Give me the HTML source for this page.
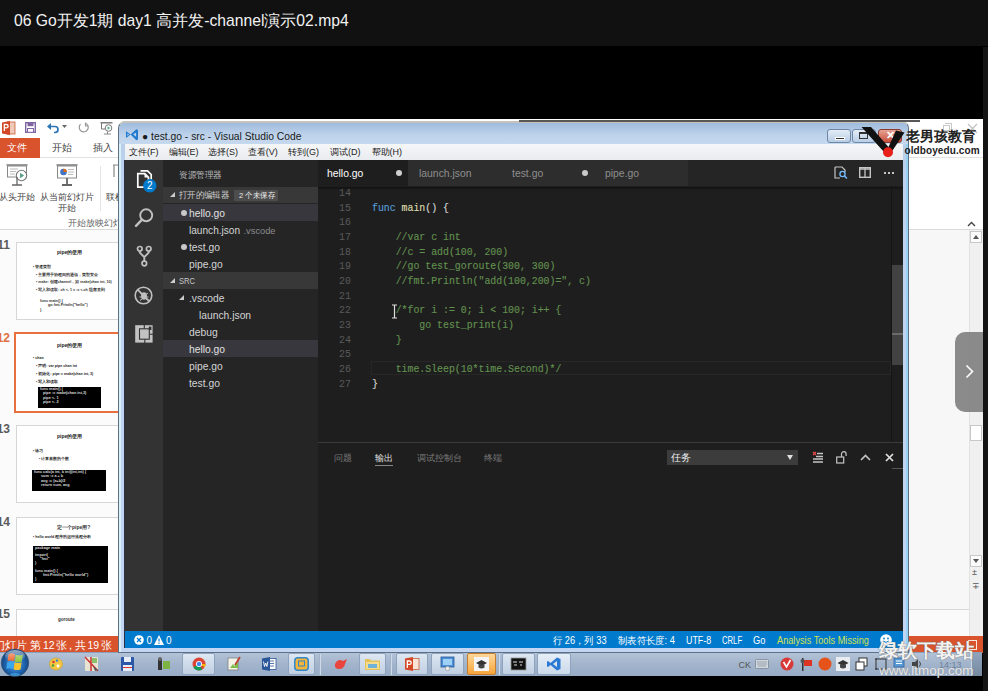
<!DOCTYPE html>
<html><head><meta charset="utf-8">
<style>
*{margin:0;padding:0;box-sizing:border-box}
html,body{width:988px;height:691px;overflow:hidden;background:#000;font-family:"Liberation Sans",sans-serif}
.a{position:absolute}
svg{position:absolute;overflow:visible}
#title{left:0;top:0;width:988px;height:46px;background:#111111;color:#f2f2f2;font-size:15.7px;line-height:18px;padding:12px 0 0 14px;white-space:nowrap}
#rstrip{left:983px;top:47px;width:5px;height:644px;background:#141414}
/* PowerPoint */
#ppt{left:0;top:119px;width:983px;height:534px;background:#fff}
.cj{font-family:"Liberation Sans",sans-serif;white-space:nowrap}
.pt{position:absolute;font-size:11px;color:#444;white-space:nowrap;line-height:13px}
.thumb{position:absolute;left:15.5px;width:110px;height:78px;background:#fff;border:1px solid #d6d6d6}
.thumb.sel{left:14px;border:2px solid #e8703f;height:81px;width:112px}
.tnum{position:absolute;left:-20px;width:30px;text-align:right;font-size:12px;color:#5a5a5a;line-height:14px;font-weight:bold}
.ln{position:absolute;height:2px;background:#333}
.blk{position:absolute;background:#000}
.tt{position:absolute;white-space:nowrap;line-height:1;font-family:"Liberation Sans",sans-serif}
</style></head><body>
<div id="title" class="a">06 Go开发1期 day1 高并发-channel演示02.mp4</div>
<div id="rstrip" class="a"></div>

<!-- PowerPoint background window -->
<div id="ppt" class="a"></div>

<!-- QAT icons -->
<svg style="left:2px;top:121px" width="13" height="14" viewBox="0 0 13 14">
 <rect x="5" y="1" width="8" height="12" fill="#f1c9b8" stroke="#c8603a" stroke-width=".8"/>
 <path d="M0 1.5 L8 0 L8 14 L0 12.5Z" fill="#d24726"/>
 <path d="M2.3 10V3.5h2.2a1.6 1.6 0 0 1 0 3.3H2.3" fill="none" stroke="#fff" stroke-width="1.3"/>
</svg>
<svg style="left:25px;top:122px" width="11" height="11" viewBox="0 0 11 11">
 <rect x=".7" y=".7" width="9.6" height="9.6" fill="#fff" stroke="#8064a2" stroke-width="1.4"/>
 <rect x="2.5" y=".7" width="6" height="3.5" fill="#8064a2"/>
 <rect x="2.5" y="6.5" width="6" height="3.8" fill="#fff" stroke="#8064a2" stroke-width="1"/>
</svg>
<svg style="left:47px;top:122px" width="12" height="11" viewBox="0 0 12 11">
 <path d="M3 4.5h5a3 3 0 0 1 0 6h-1" fill="none" stroke="#2e75b6" stroke-width="1.7"/>
 <path d="M0 4.5 L4 1 L4 8Z" fill="#2e75b6"/>
</svg>
<svg style="left:62px;top:125px" width="5" height="3" viewBox="0 0 5 3"><path d="M0 0h5L2.5 3z" fill="#666"/></svg>
<svg style="left:78px;top:122px" width="11" height="11" viewBox="0 0 11 11">
 <path d="M7.5 1.2A4.5 4.5 0 1 1 2.5 2.2" fill="none" stroke="#999" stroke-width="1.2"/>
 <path d="M7.5 0.5v3.5h3" fill="none" stroke="#999" stroke-width="1.2"/>
</svg>
<svg style="left:100px;top:122px" width="13" height="13" viewBox="0 0 13 13">
 <path d="M0.5 .8h12" stroke="#666" stroke-width="1.3"/>
 <path d="M1.5 1v6h4" fill="none" stroke="#777" stroke-width="1"/>
 <circle cx="8.5" cy="6" r="3.3" fill="#fff" stroke="#777" stroke-width="1"/>
 <path d="M7.6 4.3v3.4l2.5-1.7z" fill="#3aa88f"/>
 <path d="M4 12h7M7.5 9.5v2.5" stroke="#888" stroke-width="1"/>
</svg>
<!-- tabs -->
<div class="a" style="left:0;top:138px;width:40px;height:20px;background:#d9532c"></div>
<div class="pt" style="left:7px;top:141px;color:#fff;font-size:10px;line-height:14px">文件</div>
<div class="pt" style="left:52px;top:141px;font-size:10px;line-height:14px;color:#444">开始</div>
<div class="pt" style="left:93px;top:141px;font-size:10px;line-height:14px;color:#444">插入</div>
<div class="a" style="left:40px;top:157px;width:943px;height:1px;background:#e1e1e1"></div>
<!-- ribbon buttons -->
<svg style="left:6px;top:164px" width="22" height="22" viewBox="0 0 22 22">
 <path d="M0.5 1h21" stroke="#777" stroke-width="1.5"/>
 <rect x="1.5" y="2" width="19" height="11" fill="#fff" stroke="#888" stroke-width="1"/>
 <path d="M4 5h8M4 7.5h6M4 10h5" stroke="#bbb" stroke-width="1"/>
 <circle cx="15.5" cy="11.5" r="5.2" fill="#fff" stroke="#777" stroke-width="1.1"/>
 <path d="M14 8.8v5.4l4.2-2.7z" fill="#5aa08a"/>
 <path d="M6 21h10M11 13v8" stroke="#666" stroke-width="1.3"/>
</svg>
<svg style="left:56px;top:164px" width="22" height="22" viewBox="0 0 22 22">
 <path d="M0.5 1h21" stroke="#777" stroke-width="1.5"/>
 <rect x="1.5" y="2" width="19" height="12" fill="#fff" stroke="#888" stroke-width="1"/>
 <circle cx="7.5" cy="8" r="3.3" fill="#4472c4"/>
 <path d="M7.5 8V4.7A3.3 3.3 0 0 1 10.8 8z" fill="#e46c0a"/>
 <path d="M12 5.5h6M12 8h6M12 10.5h5" stroke="#bbb" stroke-width="1"/>
 <path d="M6 21h10M11 14v7" stroke="#666" stroke-width="1.8"/>
</svg>
<div class="pt" style="left:-1px;top:191.5px;font-size:9px;line-height:11px">从头开始</div>
<div class="pt" style="left:40px;top:191.5px;font-size:9px;line-height:11px">从当前幻灯片</div>
<div class="pt" style="left:58px;top:202.5px;font-size:9px;line-height:11px">开始</div>
<div class="a" style="left:100px;top:166px;width:1px;height:45px;background:#e4e4e4"></div>
<div class="pt" style="left:106px;top:191.5px;font-size:9px;line-height:11px">联机</div>
<svg style="left:112px;top:164px" width="8" height="20" viewBox="0 0 8 20"><path d="M1 1h7M2 1v12" stroke="#888" stroke-width="1.2"/></svg>
<div class="pt" style="left:68px;top:218px;font-size:9px;line-height:11px;color:#666">开始放映幻灯片</div>
<div class="a" style="left:0;top:229px;width:983px;height:1px;background:#dadada"></div>
<!-- thumbnail pane -->
<div class="a" style="left:0;top:230px;width:983px;height:406px;background:#f7f7f7"></div>
<div class="a" style="left:0;top:230px;width:118px;height:406px;background:#fbfbfc"></div>
<!-- thumbnails -->
<div class="tnum" style="top:238px;">11</div>
<div class="thumb" style="top:242px"></div>
<div class="tt" style="left:57px;top:250px;font-size:5px;color:#222;font-weight:bold;">pipe的使用</div>
<div class="tt" style="left:33px;top:266px;font-size:3.6px;color:#222;font-weight:bold;">▪ 管道类型</div>
<div class="tt" style="left:36px;top:274px;font-size:3.6px;color:#222;font-weight:bold;">▪ 主要用于协程间的通信，类型安全</div>
<div class="tt" style="left:36px;top:281px;font-size:3.6px;color:#333;font-weight:bold;">▪ make: 创建channel，如 make(chan int, 10)</div>
<div class="tt" style="left:36px;top:289px;font-size:3.6px;color:#333;font-weight:bold;">▪ 写入和读取: ch &lt;- 1   v := &lt;-ch  阻塞直到</div>
<div class="tt" style="left:40px;top:300px;font-size:3.8px;color:#333;font-weight:bold;">func main() {</div>
<div class="tt" style="left:48px;top:304px;font-size:3.8px;color:#333;font-weight:bold;">go fmt.Println("hello")</div>
<div class="tt" style="left:40px;top:309px;font-size:3.8px;color:#333;font-weight:bold;">}</div>
<div class="tnum" style="top:331px;color:#e0703f">12</div>
<div class="thumb sel" style="top:332px"></div>
<div class="tt" style="left:57px;top:343px;font-size:5px;color:#222;font-weight:bold;">pipe的使用</div>
<div class="tt" style="left:33px;top:357px;font-size:3.6px;color:#222;font-weight:bold;">▪ chan</div>
<div class="tt" style="left:36px;top:365px;font-size:3.6px;color:#222;font-weight:bold;">▪ 声明: var pipe chan int</div>
<div class="tt" style="left:36px;top:373px;font-size:3.6px;color:#222;font-weight:bold;">▪ 初始化: pipe = make(chan int, 3)</div>
<div class="tt" style="left:36px;top:381px;font-size:3.6px;color:#222;font-weight:bold;">▪ 写入和读取</div>
<div class="blk" style="left:38px;top:387px;width:63px;height:21px"></div>
<div class="tt" style="left:40px;top:387.5px;font-size:3.8px;color:#ddd;font-weight:bold;">func main() {</div>
<div class="tt" style="left:43px;top:392px;font-size:3.8px;color:#ddd;font-weight:bold;">pipe := make(chan int,3)</div>
<div class="tt" style="left:43px;top:396.5px;font-size:3.8px;color:#ddd;font-weight:bold;">pipe &lt;- 1</div>
<div class="tt" style="left:43px;top:401px;font-size:3.8px;color:#ddd;font-weight:bold;">pipe &lt;- 2</div>
<div class="tnum" style="top:422px;">13</div>
<div class="thumb" style="top:425px"></div>
<div class="tt" style="left:57px;top:434px;font-size:5px;color:#222;font-weight:bold;">pipe的使用</div>
<div class="tt" style="left:33px;top:450px;font-size:3.6px;color:#222;font-weight:bold;">▪ 练习</div>
<div class="tt" style="left:39px;top:458px;font-size:3.6px;color:#222;font-weight:bold;">▪ 计算素数的个数</div>
<div class="blk" style="left:32px;top:470px;width:74px;height:21px"></div>
<div class="tt" style="left:34px;top:470.5px;font-size:3.8px;color:#ddd;font-weight:bold;">func calc(a int, b int)(int,int) {</div>
<div class="tt" style="left:41px;top:475px;font-size:3.8px;color:#ddd;font-weight:bold;">sum := a + b</div>
<div class="tt" style="left:41px;top:479.5px;font-size:3.8px;color:#ddd;font-weight:bold;">avg := (a+b)/2</div>
<div class="tt" style="left:41px;top:484px;font-size:3.8px;color:#ddd;font-weight:bold;">return sum, avg</div>
<div class="tnum" style="top:515px;">14</div>
<div class="thumb" style="top:517px"></div>
<div class="tt" style="left:57px;top:525px;font-size:5px;color:#333;font-weight:bold;">定一个pipe用?</div>
<div class="tt" style="left:33px;top:536px;font-size:3.6px;color:#222;font-weight:bold;">▪ hello world 程序的运行流程分析</div>
<div class="blk" style="left:33px;top:546px;width:75px;height:37px"></div>
<div class="tt" style="left:35px;top:546.5px;font-size:3.8px;color:#ddd;font-weight:bold;">package main</div>
<div class="tt" style="left:35px;top:554px;font-size:3.8px;color:#ddd;font-weight:bold;">import(</div>
<div class="tt" style="left:40px;top:558px;font-size:3.8px;color:#ddd;font-weight:bold;">"fmt"</div>
<div class="tt" style="left:35px;top:562px;font-size:3.8px;color:#ddd;font-weight:bold;">)</div>
<div class="tt" style="left:35px;top:570px;font-size:3.8px;color:#ddd;font-weight:bold;">func main() {</div>
<div class="tt" style="left:43px;top:574px;font-size:3.8px;color:#ddd;font-weight:bold;">fmt.Println("hello world")</div>
<div class="tt" style="left:35px;top:578px;font-size:3.8px;color:#ddd;font-weight:bold;">}</div>
<div class="tnum" style="top:607px;">15</div>
<div class="thumb" style="top:609px;height:40px"></div>
<div class="tt" style="left:58px;top:617.5px;font-size:4.5px;color:#333;font-weight:bold;">goroute</div>

<!-- ppt status bar -->
<div class="a" style="left:0;top:636px;width:983px;height:17px;background:#d9532c"></div>
<div class="pt" style="left:-6px;top:638.5px;color:#fff;font-size:10.5px;line-height:13px">幻灯片</div><div class="pt" style="left:30px;top:638.5px;color:#fff;font-size:10.5px;line-height:13px">第</div><div class="pt" style="left:43px;top:638.5px;color:#fff;font-size:10.5px;line-height:13px">12</div><div class="pt" style="left:55.5px;top:638.5px;color:#fff;font-size:10.5px;line-height:13px">张</div><div class="pt" style="left:65px;top:638.5px;color:#fff;font-size:10.5px;line-height:13px">，</div><div class="pt" style="left:74.5px;top:638.5px;color:#fff;font-size:10.5px;line-height:13px">共</div><div class="pt" style="left:87.5px;top:638.5px;color:#fff;font-size:10.5px;line-height:13px">19</div><div class="pt" style="left:100.5px;top:638.5px;color:#fff;font-size:10.5px;line-height:13px">张</div>

<!-- taskbar -->
<div class="a" style="left:0;top:652px;width:982px;height:24px;background:linear-gradient(#b3c3d8 0%,#a3b5cc 45%,#97abc6 100%);border-top:1px solid #8a9fba"></div>
<!-- start orb -->
<svg style="left:0px;top:648px" width="30" height="30" viewBox="0 0 30 30">
 <defs>
  <radialGradient id="orb" cx=".5" cy=".55" r=".55"><stop offset="0" stop-color="#5aa7e6"/><stop offset=".6" stop-color="#1f66b3"/><stop offset="1" stop-color="#163d6e"/></radialGradient>
  <linearGradient id="orbhl" x1="0" y1="0" x2="0" y2="1"><stop offset="0" stop-color="#fff" stop-opacity=".55"/><stop offset="1" stop-color="#fff" stop-opacity="0"/></linearGradient>
 </defs>
 <circle cx="15" cy="14.8" r="13.8" fill="url(#orb)" stroke="#3b5677" stroke-width=".6"/>
 <path d="M8.5 6.2q3.2-1.8 6.6 0l-1 7q-3.2-1.6-6.6 0z" fill="#f0642a"/>
 <path d="M15.8 6.4q3.3 1.8 7 0l-1 7q-3.5 1.8-7 0z" fill="#8cc43a"/>
 <path d="M7.3 14q3.2-1.6 6.6 0l-1 7q-3.2-1.6-6.6 0z" fill="#3aa6ec"/>
 <path d="M14.6 14.2q3.3 1.8 7 0l-1 7q-3.5 1.8-7 0z" fill="#f8c22c"/>
 <ellipse cx="15" cy="8" rx="10" ry="6" fill="url(#orbhl)"/>
 <ellipse cx="15" cy="26.5" rx="5" ry="1.6" fill="#5fd0ff" opacity=".45"/>
</svg>
<!-- palette -->
<svg style="left:49px;top:657px" width="14" height="14" viewBox="0 0 14 14"><ellipse cx="7" cy="7" rx="6.5" ry="6" fill="#f5c842" stroke="#c99a2a" stroke-width=".6"/><circle cx="4.5" cy="5" r="1.3" fill="#e03a2f"/><circle cx="8" cy="3.6" r="1.2" fill="#2e7fd8"/><circle cx="4" cy="8.5" r="1.2" fill="#3aa13a"/><circle cx="9" cy="9" r="1.4" fill="#fff"/></svg>
<!-- map -->
<svg style="left:85px;top:657px" width="13" height="14" viewBox="0 0 13 14"><rect x="0" y="0" width="13" height="14" fill="#e8e3d2"/><path d="M0 0l13 14M6 0v14" stroke="#c33" stroke-width="1.5"/><rect x="7" y="1" width="5" height="5" fill="#8cc06a"/><path d="M8 9l5 4-3 1z" fill="#555"/></svg>
<!-- floppy -->
<svg style="left:121px;top:657px" width="13" height="14" viewBox="0 0 13 14"><rect x="0" y="0" width="13" height="14" rx="1" fill="#2a57a8"/><rect x="3" y="0" width="7" height="5" fill="#e8eef8"/><rect x="2" y="8" width="9" height="6" fill="#e8eef8"/><rect x="2" y="10" width="9" height="1" fill="#d33"/></svg>
<!-- tools -->
<svg style="left:158px;top:657px" width="12" height="14" viewBox="0 0 12 14"><rect x="0" y="2" width="4" height="11" fill="#333"/><rect x="5" y="4" width="7" height="8" fill="#7cb342"/><circle cx="2" cy="2" r="2" fill="#666"/></svg>
<!-- chrome btn -->
<div class="a" style="left:182px;top:653px;width:33px;height:22px;border:1px solid #8ea3bd;background:linear-gradient(#dde7f2,#bfcfe2);border-radius:2px"></div>
<svg style="left:192px;top:657px" width="14" height="14" viewBox="0 0 14 14"><circle cx="7" cy="7" r="6.5" fill="#db4437"/><path d="M7 7L1.4 10.3A6.5 6.5 0 0 0 10.2 12.6z" fill="#0f9d58"/><path d="M7 7L12.6 10.3A6.5 6.5 0 0 0 7 .5 6.5 6.5 0 0 1 13.5 7z" fill="#f4b400"/><circle cx="7" cy="7" r="3" fill="#fff"/><circle cx="7" cy="7" r="2.2" fill="#4285f4"/></svg>
<!-- notepad -->
<svg style="left:227px;top:656px" width="14" height="15" viewBox="0 0 14 15"><rect x="1" y="2" width="10" height="12" fill="#f3f3e8" stroke="#777" stroke-width=".7"/><path d="M3 12l3-4 1.5 2L11 6v6z" fill="#7cc04b"/><path d="M8 9L13 1" stroke="#c0392b" stroke-width="1.6"/></svg>
<!-- word -->
<svg style="left:262px;top:657px" width="14" height="14" viewBox="0 0 14 14"><rect x="5" y="1.5" width="9" height="11" fill="#fff" stroke="#2b579a" stroke-width=".8"/><path d="M7 4h5M7 6.5h5M7 9h5" stroke="#2b579a" stroke-width=".8"/><path d="M0 1.5L8 0v14l-8-1.5z" fill="#2b579a"/><path d="M1.5 4.5l1 5 1.2-3.5 1.2 3.5 1-5" fill="none" stroke="#fff" stroke-width=".9"/></svg>
<!-- btn 288 -->
<div class="a" style="left:288px;top:653px;width:27px;height:22px;border:1px solid #8ea3bd;background:linear-gradient(#dde7f2,#bfcfe2);border-radius:2px"></div>
<svg style="left:294px;top:657px" width="15" height="14" viewBox="0 0 15 14"><rect x=".8" y=".8" width="13.4" height="12.4" rx="3" fill="#f3b53a" stroke="#2f86c8" stroke-width="1.5"/><rect x="4" y="3.5" width="7" height="6" fill="#2f86c8"/><rect x="5" y="4.5" width="5" height="4" fill="#f3b53a"/></svg>
<div class="a" style="left:319px;top:654px;width:2px;height:21px;background:linear-gradient(90deg,#8aa0ba,#e6eef8)"></div>
<!-- bird -->
<svg style="left:334px;top:658px" width="14" height="12" viewBox="0 0 14 12"><path d="M1 6q3-6 8-3l4-2-2 5q-1 5-6 5T1 6z" fill="#e8463d"/></svg>
<!-- folder btn -->
<div class="a" style="left:359px;top:653px;width:27px;height:22px;border:1px solid #8ea3bd;background:linear-gradient(#dde7f2,#bfcfe2);border-radius:2px"></div>
<svg style="left:365px;top:658px" width="15" height="12" viewBox="0 0 15 12"><path d="M0 1h5l1 1.5h9V12H0z" fill="#e6c35a"/><rect x="1" y="4" width="13" height="7" fill="#f3dc8e"/><rect x="3" y="6" width="9" height="4" fill="#6fb0d8"/></svg>
<div class="a" style="left:390px;top:654px;width:2px;height:21px;background:linear-gradient(90deg,#8aa0ba,#e6eef8)"></div>
<!-- ppt btn -->
<div class="a" style="left:396px;top:653px;width:32px;height:22px;border:1px solid #8ea3bd;background:linear-gradient(#dde7f2,#bfcfe2);border-radius:2px"></div>
<svg style="left:405px;top:657px" width="14" height="14" viewBox="0 0 14 14"><rect x="5" y="1.5" width="9" height="11" fill="#fbe3d6" stroke="#c8603a" stroke-width=".8"/><path d="M0 1.5L8 0v14l-8-1.5z" fill="#d24726"/><path d="M2.3 11V4h2.2a1.7 1.7 0 0 1 0 3.4H2.3" fill="none" stroke="#fff" stroke-width="1.3"/></svg>
<!-- monitor btn -->
<div class="a" style="left:431px;top:653px;width:33px;height:22px;border:1px solid #8ea3bd;background:linear-gradient(#dde7f2,#bfcfe2);border-radius:2px"></div>
<svg style="left:440px;top:656px" width="15" height="15" viewBox="0 0 15 15"><rect x="1" y="1" width="13" height="10" fill="#4d8fd6" stroke="#2a5b94" stroke-width=".8"/><rect x="3" y="3" width="9" height="6" fill="#9fd0f5"/><circle cx="7.5" cy="12.5" r="2.2" fill="#eee" stroke="#888" stroke-width=".6"/></svg>
<!-- orange active btn -->
<div class="a" style="left:467px;top:653px;width:29px;height:22px;border:1px solid #c57d2c;background:linear-gradient(#ffd89a,#f6a53a);border-radius:2px"></div>
<svg style="left:474px;top:657px" width="15" height="14" viewBox="0 0 15 14"><rect x="0" y="0" width="15" height="14" fill="#f4f4f4"/><path d="M2 6l5.5-3 5.5 3-5.5 3z" fill="#333"/><path d="M4.5 7.5v3q3 2 6 0v-3" fill="#444"/></svg>
<div class="a" style="left:498px;top:654px;width:2px;height:21px;background:linear-gradient(90deg,#8aa0ba,#e6eef8)"></div>
<!-- cmd btn -->
<div class="a" style="left:502px;top:653px;width:33px;height:22px;border:1px solid #8ea3bd;background:linear-gradient(#dde7f2,#bfcfe2);border-radius:2px"></div>
<svg style="left:511px;top:658px" width="15" height="12" viewBox="0 0 15 12"><rect x="0" y="0" width="15" height="12" fill="#111" stroke="#999" stroke-width=".8"/><path d="M2 4h4M8 4h4M3 7h3M9 7h2" stroke="#ddd" stroke-width="1.2"/></svg>
<!-- vscode btn -->
<div class="a" style="left:537px;top:653px;width:34px;height:22px;border:1px solid #8ea3bd;background:linear-gradient(#e6eef7,#cbd9ea);border-radius:2px"></div>
<svg style="left:547px;top:657px" width="14" height="14" viewBox="0 0 14 14"><path d="M10 0.5L13.5 2v10L10 13.5 3.5 8 1 10 0 9.5v-5L1 4l2.5 2zM10 4L6 7l4 3z" fill="#2a7ad4"/></svg>
<div class="a" style="left:971px;top:653px;width:11px;height:23px;background:linear-gradient(#8fa3bd,#75899f);border-left:1px solid #c8d4e2"></div>
<!-- tray -->
<div class="pt" style="left:738.5px;top:658.5px;font-size:9px;color:#555;line-height:12px">CK</div>
<svg style="left:755px;top:659px" width="14" height="10" viewBox="0 0 14 10"><rect x=".5" y=".5" width="13" height="9" rx="1" fill="#d0d6de" stroke="#7c8896" stroke-width=".8"/><path d="M2 3h10M2 5h10M3 7h8" stroke="#8a94a0" stroke-width=".8"/></svg>
<svg style="left:780px;top:657px" width="14" height="14" viewBox="0 0 14 14"><circle cx="7" cy="7" r="6.5" fill="#d83a3a"/><path d="M3.5 5l3 5 4-7" fill="none" stroke="#fff" stroke-width="1.6"/></svg>
<svg style="left:800px;top:657px" width="12" height="14" viewBox="0 0 12 14"><rect x="2" y="1" width="1.5" height="13" fill="#333"/><rect x="4" y="3" width="8" height="6" fill="#d32"/><circle cx="2.5" cy="4" r="2" fill="#555"/></svg>
<svg style="left:818px;top:657px" width="14" height="14" viewBox="0 0 14 14"><circle cx="7" cy="7" r="6.5" fill="#e5531a"/></svg>
<svg style="left:836px;top:657px" width="14" height="14" viewBox="0 0 14 14"><rect x="0" y="0" width="14" height="14" fill="#e9edf2"/><path d="M1.5 6l5.5-3 5.5 3-5.5 3z" fill="#333"/><path d="M4 7.5v3q3 2 6 0v-3" fill="#444"/></svg>
<svg style="left:855px;top:657px" width="13" height="14" viewBox="0 0 13 14"><rect x="4" y="1" width="8" height="8" fill="#fff" stroke="#333" stroke-width="1"/><rect x="1" y="5" width="8" height="8" fill="#fff" stroke="#333" stroke-width="1"/></svg>
<svg style="left:875px;top:657px" width="12" height="14" viewBox="0 0 12 14"><rect x="1" y="2" width="10" height="10" fill="none" stroke="#333" stroke-width="1"/><path d="M0 2h2M0 12h2" stroke="#333"/></svg>
<svg style="left:893px;top:657px" width="12" height="13" viewBox="0 0 12 13"><rect x="1" y="1" width="10" height="9" fill="#5b9bd5" stroke="#2d5e9e" stroke-width=".8"/><path d="M3 4h6M3 6.5h6" stroke="#fff" stroke-width="1"/></svg>
<svg style="left:911px;top:658px" width="12" height="12" viewBox="0 0 12 12"><path d="M1 4h3l3-3v10L4 8H1z" fill="#444"/><path d="M8.5 3.5q2 2.5 0 5" fill="none" stroke="#444" stroke-width="1"/></svg>
<div class="pt" style="left:939px;top:658.5px;font-size:9px;color:#6f8299;line-height:12px">14:13</div>
<!-- PPT right side (visible past VS Code) -->
<div class="a" style="left:909px;top:230px;width:74px;height:406px;background:#f7f7f7"></div>

<div class="a" style="left:969px;top:230px;width:14px;height:406px;background:#f0f0f0;border-left:1px solid #e2e2e2"></div>
<div class="a" style="left:970px;top:231px;width:12px;height:12px;background:#fcfcfc;border:1px solid #c8c8c8"></div>
<svg style="left:973px;top:235px" width="6" height="4" viewBox="0 0 6 4"><path d="M0 4L3 0 6 4z" fill="#555"/></svg>
<div class="a" style="left:970px;top:425px;width:12px;height:16px;background:#fff;border:1px solid #c8c8c8"></div>
<div class="a" style="left:970px;top:555px;width:12px;height:12px;background:#fcfcfc;border:1px solid #c8c8c8"></div>
<svg style="left:973px;top:559px" width="6" height="4" viewBox="0 0 6 4"><path d="M0 0L3 4 6 0z" fill="#555"/></svg>
<div class="pt" style="left:972px;top:567px;font-size:9px;color:#555;line-height:10px">±</div>
<div class="pt" style="left:972px;top:581px;font-size:9px;color:#555;line-height:10px">∓</div>
<div class="a" style="left:909px;top:609px;width:60px;height:1px;background:#d8d8d8"></div>
<div class="a" style="left:909px;top:610px;width:60px;height:26px;background:#fafafa"></div>
<svg style="left:967px;top:221px" width="9" height="6" viewBox="0 0 9 6"><path d="M1 5L4.5 1.5 8 5" fill="none" stroke="#444" stroke-width="1.4"/></svg>
<!-- faint ppt window buttons -->
<div class="a" style="left:943px;top:125px;width:7px;height:6px;border:1px solid #c8c8c8"></div><div class="a" style="left:945px;top:123px;width:7px;height:6px;border-top:1px solid #c8c8c8;border-right:1px solid #c8c8c8"></div>
<svg style="left:968px;top:124px" width="9" height="9" viewBox="0 0 9 9"><path d="M0 0l9 9M9 0L0 9" stroke="#c0c0c0" stroke-width="1.2"/></svg>

<!-- VS Code window frame -->
<div class="a" style="left:118px;top:120.5px;width:791px;height:532.5px;border:1px solid #5e6f82;border-top:2px solid #c4c4bc;border-radius:7px 7px 0 0;background:linear-gradient(180deg,#a9c3e2 0px,#c4d7ee 10px,#b9cfe9 22px,#bfd2f0 60px,#c2d5f2 100%)"></div>
<div class="a" style="left:119px;top:140px;width:1.5px;height:512px;background:#d8f0f8"></div>
<div class="a" style="left:906px;top:140px;width:2px;height:512px;background:#98d2f2"></div>
<div class="a" style="left:124px;top:160px;width:1px;height:488px;background:#2c3040"></div>
<div class="a" style="left:119px;top:123px;width:789px;height:21px;border-radius:6px 6px 0 0;background:linear-gradient(180deg,#9fbbdd 0%,#bdd2ea 55%,#c5d8ee 100%)"></div>
<!-- title -->
<svg style="left:125.8px;top:129.3px" width="12" height="11.3" viewBox="0 0 12 11.3"><path fill-rule="evenodd" d="M0 2.3L4.6 5.6 10.3 0.2 12 0.9V10.4L10.3 11.2 4.6 5.6 0 9ZM1.4 4.4V6.9L3.1 5.6ZM7.2 5.6L10.1 7.8V3.4Z" fill="#1f7ad0"/></svg>
<div class="pt" style="left:142px;top:129.5px;font-size:10.3px;color:#1a1a1a;line-height:14px">● test.go - src - Visual Studio Code</div>
<!-- window buttons -->
<div class="a" style="left:827px;top:129px;width:24px;height:14px;border:1px solid #6d87a6;border-radius:3px;background:linear-gradient(#e3ecf6,#b8cde5)"></div>
<div class="a" style="left:835px;top:137px;width:8px;height:2px;background:#333;border:1px solid #fff;box-sizing:content-box;height:1px"></div>
<div class="a" style="left:852px;top:129px;width:24px;height:14px;border:1px solid #6d87a6;border-radius:3px;background:linear-gradient(#e3ecf6,#b8cde5)"></div>
<div class="a" style="left:859px;top:132px;width:9px;height:7px;border:1px solid #333;border-top-width:2px"></div>
<div class="a" style="left:878px;top:129px;width:24px;height:14px;border:1px solid #8a3a2e;border-radius:3px;background:linear-gradient(#e8a393,#c8503c)"></div>
<div class="pt" style="left:886px;top:129px;font-size:11px;color:#fff;font-weight:bold">✕</div>
<!-- menu bar -->
<div class="a" style="left:125px;top:144px;width:778px;height:16px;background:linear-gradient(#f5f6f8,#e9ecf0)"></div>
<div class="pt" style="left:129px;top:146px;font-size:9px;color:#222;line-height:13px">文件(F)</div>
<div class="pt" style="left:168.6px;top:146px;font-size:9px;color:#222;line-height:13px">编辑(E)</div>
<div class="pt" style="left:208px;top:146px;font-size:9px;color:#222;line-height:13px">选择(S)</div>
<div class="pt" style="left:247.8px;top:146px;font-size:9px;color:#222;line-height:13px">查看(V)</div>
<div class="pt" style="left:288px;top:146px;font-size:9px;color:#222;line-height:13px">转到(G)</div>
<div class="pt" style="left:330px;top:146px;font-size:9px;color:#222;line-height:13px">调试(D)</div>
<div class="pt" style="left:371.5px;top:146px;font-size:9px;color:#222;line-height:13px">帮助(H)</div>
<!-- VS Code body -->
<div class="a" style="left:125px;top:160px;width:38px;height:471px;background:#333333"></div>
<div class="a" style="left:163px;top:160px;width:155px;height:471px;background:#252526"></div>
<div class="a" style="left:318px;top:160px;width:585px;height:26px;background:#252526"></div>
<div class="a" style="left:318px;top:186px;width:585px;height:445px;background:#1e1e1e"></div>
<!-- activity icons -->
<svg style="left:128px;top:164px" width="32" height="32" viewBox="0 0 32 32">
 <path d="M12.5 6.8H19.5L23.2 10.5V15.5" fill="none" stroke="#fff" stroke-width="1.7"/>
 <path d="M9.8 9.6H16.8L20.5 13.3V23.2H9.8Z" fill="#333" stroke="#fff" stroke-width="1.7"/>
 <path d="M16.5 9.6V13.6H20.5Z" fill="#fff"/>
 <circle cx="21.8" cy="21.8" r="6.7" fill="#007acc"/>
 <text x="21.8" y="25.3" font-size="10" font-family="Liberation Sans" fill="#fff" text-anchor="middle">2</text>
</svg>
<svg style="left:134px;top:207px" width="20" height="22" viewBox="0 0 20 22">
 <circle cx="12.2" cy="8.3" r="6" fill="none" stroke="#c0c0c0" stroke-width="1.9"/>
 <path d="M8 12.6L2 18.8" stroke="#c0c0c0" stroke-width="2.4" stroke-linecap="round"/>
</svg>
<svg style="left:136px;top:245px" width="16" height="22" viewBox="0 0 16 22">
 <circle cx="3.8" cy="3.8" r="2.3" fill="none" stroke="#c0c0c0" stroke-width="1.7"/>
 <circle cx="12.7" cy="3.8" r="2.3" fill="none" stroke="#c0c0c0" stroke-width="1.7"/>
 <circle cx="8.3" cy="18.5" r="2.3" fill="none" stroke="#c0c0c0" stroke-width="1.7"/>
 <path d="M3.8 6.1v1.5l4.5 4.5v4.1M12.7 6.1v1.5l-4.4 4.5" fill="none" stroke="#c0c0c0" stroke-width="1.9"/>
</svg>
<svg style="left:134px;top:286px" width="19" height="19" viewBox="0 0 19 19">
 <circle cx="9.5" cy="9.5" r="8.3" fill="none" stroke="#bfbfbf" stroke-width="1.6"/>
 <path d="M3.6 3.6L15.4 15.4" stroke="#bfbfbf" stroke-width="1.6"/>
 <ellipse cx="10" cy="10" rx="3" ry="3.8" fill="#bfbfbf"/>
 <path d="M6 7l2 1.5M14 7l-2 1.5M5.5 11h2M14.5 11h-2M6 14.5l2-1.5M14 14.5l-2-1.5" stroke="#bfbfbf" stroke-width="1"/>
</svg>
<svg style="left:134px;top:324px" width="20" height="20" viewBox="0 0 20 20">
 <rect x="1.2" y="1.2" width="17.4" height="17.4" fill="#c2c2c2"/>
 <rect x="5.5" y="4.8" width="9.8" height="10.4" fill="#c2c2c2" stroke="#333" stroke-width="1.1"/>
 <path d="M10.3 1v3.8M10.8 15.2V19M15.3 10.3H19" stroke="#333" stroke-width="1.1"/>
 <rect x="14.8" y="2.6" width="2.6" height="3.4" fill="#333"/>
</svg>
<!-- sidebar -->
<div class="pt" style="left:179px;top:169px;font-size:8.5px;color:#bbbbbb;line-height:13px;transform:scaleX(.955);transform-origin:0 0">资源管理器</div>
<div class="a" style="left:163px;top:187px;width:155px;height:16px;background:#383838"></div>
<svg style="left:170px;top:192px" width="5" height="5" viewBox="0 0 5 5"><path d="M5 0v5H0z" fill="#ccc"/></svg>
<div class="pt" style="left:179px;top:189px;font-size:8.6px;color:#cccccc;line-height:12px;transform:scaleX(.93);transform-origin:0 0">打开的编辑器</div>
<div class="a" style="left:234px;top:190px;width:44px;height:11px;background:#4d4d4d;border-radius:1px"></div>
<div class="pt" style="left:239px;top:190px;font-size:8px;color:#eee;line-height:11px;transform:scaleX(.93);transform-origin:0 0">2 个未保存</div>
<div class="a" style="left:163px;top:204px;width:155px;height:17px;background:#37373d"></div>
<div class="a" style="left:180.5px;top:209.5px;width:6px;height:6px;border-radius:50%;background:#c8c8c8"></div>
<div class="pt" style="left:189px;top:205.7px;font-size:10.3px;color:#e0e0e0;line-height:15px">hello.go</div>
<div class="pt" style="left:189px;top:222.7px;font-size:10.1px;color:#d4d4d4;line-height:15px">launch.json</div><div class="pt" style="left:243.5px;top:223.7px;font-size:9.3px;color:#8c8c8c;line-height:15px">.vscode</div>
<div class="a" style="left:180.5px;top:243.5px;width:6px;height:6px;border-radius:50%;background:#c8c8c8"></div>
<div class="pt" style="left:189px;top:239.7px;font-size:10.3px;color:#d4d4d4;line-height:15px">test.go</div>
<div class="pt" style="left:189px;top:256.7px;font-size:10.3px;color:#d4d4d4;line-height:15px">pipe.go</div>
<div class="a" style="left:163px;top:272px;width:155px;height:17px;background:#383838"></div>
<svg style="left:170px;top:278px" width="5" height="5" viewBox="0 0 5 5"><path d="M5 0v5H0z" fill="#ccc"/></svg>
<div class="pt" style="left:179px;top:274.5px;font-size:9.5px;color:#c8c8c8;line-height:12px;transform:scaleX(.8);transform-origin:0 0">SRC</div>
<svg style="left:179px;top:295px" width="5" height="5" viewBox="0 0 5 5"><path d="M5 0v5H0z" fill="#ccc"/></svg>
<div class="pt" style="left:189px;top:290.7px;font-size:10.3px;color:#d4d4d4;line-height:15px">.vscode</div>
<div class="pt" style="left:199px;top:307.7px;font-size:10.3px;color:#d4d4d4;line-height:15px">launch.json</div>
<div class="pt" style="left:189px;top:324.7px;font-size:10.3px;color:#d4d4d4;line-height:15px">debug</div>
<div class="a" style="left:163px;top:340px;width:155px;height:17px;background:#37373d"></div>
<div class="pt" style="left:189px;top:341.7px;font-size:10.3px;color:#e0e0e0;line-height:15px">hello.go</div>
<div class="pt" style="left:189px;top:358.7px;font-size:10.3px;color:#d4d4d4;line-height:15px">pipe.go</div>
<div class="pt" style="left:189px;top:375.7px;font-size:10.3px;color:#d4d4d4;line-height:15px">test.go</div>
<!-- editor tabs -->
<div class="a" style="left:318px;top:160px;width:90px;height:26px;background:#1e1e1e"></div>
<div class="a" style="left:408px;top:160px;width:94px;height:26px;background:#2d2d2d"></div>
<div class="a" style="left:502px;top:160px;width:92px;height:26px;background:#2d2d2d"></div>
<div class="a" style="left:594px;top:160px;width:94px;height:26px;background:#2d2d2d"></div>
<div class="pt" style="left:327px;top:166px;font-size:10.4px;color:#ffffff;line-height:15px">hello.go</div>
<div class="a" style="left:396px;top:170px;width:6px;height:6px;border-radius:50%;background:#d0d0d0"></div>
<div class="pt" style="left:419px;top:166px;font-size:10.4px;color:#8d8d8d;line-height:15px">launch.json</div>
<div class="pt" style="left:512px;top:166px;font-size:10.4px;color:#8d8d8d;line-height:15px">test.go</div>
<div class="a" style="left:582px;top:170px;width:6px;height:6px;border-radius:50%;background:#c8c8c8"></div>
<div class="pt" style="left:605px;top:166px;font-size:10.4px;color:#8d8d8d;line-height:15px">pipe.go</div>
<!-- tab actions -->
<svg style="left:834px;top:166px" width="14" height="13" viewBox="0 0 14 13"><path d="M1 1h7l3 3v2M1 1v11h5" fill="none" stroke="#c5c5c5" stroke-width="1.2"/><circle cx="8.5" cy="8" r="2.6" fill="none" stroke="#75beff" stroke-width="1.3"/><path d="M10.5 10l2.5 2.5" stroke="#75beff" stroke-width="1.5"/></svg>
<svg style="left:859px;top:167px" width="12" height="11" viewBox="0 0 12 11"><rect x=".7" y=".7" width="10.6" height="9.6" fill="none" stroke="#c5c5c5" stroke-width="1.4"/><path d="M6 1v9" stroke="#c5c5c5" stroke-width="1.3"/><path d="M1 2h10" stroke="#c5c5c5" stroke-width="1.5"/></svg>
<div class="a" style="left:884px;top:172px;width:2px;height:2px;background:#c5c5c5"></div>
<div class="a" style="left:888px;top:172px;width:2px;height:2px;background:#c5c5c5"></div>
<div class="a" style="left:892px;top:172px;width:2px;height:2px;background:#c5c5c5"></div>
<!-- code -->
<div class="a" style="left:318px;top:187px;width:585px;height:3px;background:linear-gradient(#111,rgba(30,30,30,0))"></div>
<div class="a" style="left:371px;top:361px;width:520px;height:14px;border:1px solid #272727"></div>
<div class="a" id="gutter" style="left:310px;top:186px;width:41px;font-family:'Liberation Mono',monospace;font-size:10.8px;line-height:14.65px;color:#5a5a5a;text-align:right;white-space:pre;transform:scaleX(.92);transform-origin:100% 0">14
15
16
17
18
19
20
21
22
23
24
25
26
27</div>
<div class="a" id="code" style="left:371.5px;top:186px;-webkit-text-stroke:.15px;font-family:'Liberation Mono',monospace;font-size:10.5px;line-height:14.65px;color:#d4d4d4;white-space:pre;transform:scaleX(.939);transform-origin:0 0">
<span style="color:#569cd6">func</span> <span style="color:#dcdcaa">main</span>() {

<span style="color:#62904f">    //var c int
    //c = add(100, 200)
    //go test_goroute(300, 300)
    //fmt.Println("add(100,200)=", c)

    /*for i := 0; i &lt; 100; i++ {
        go test_print(i)
    }

    time.Sleep(10*time.Second)*/</span>
}</div>
<svg style="left:391px;top:304px" width="7" height="15" viewBox="0 0 7 15"><path d="M1 1h5M3.5 1v13M1 14h5" stroke="#ddd" stroke-width="1.2" fill="none"/></svg>
<!-- scrollbar -->
<div class="a" style="left:891px;top:186px;width:1px;height:256px;background:#151515"></div>
<div class="a" style="left:892px;top:265px;width:11px;height:100px;background:#424242"></div>
<div class="a" style="left:892px;top:333px;width:11px;height:2px;background:#6a6a6a"></div>
<!-- panel -->
<div class="a" style="left:318px;top:442px;width:585px;height:1px;background:#3a3a3a"></div>
<div class="pt" style="left:334px;top:452px;font-size:8.8px;color:#7c7c7c;line-height:12px">问题</div>
<div class="pt" style="left:375px;top:452px;font-size:8.8px;color:#e7e7e7;line-height:12px">输出</div>
<div class="a" style="left:375px;top:465px;width:18px;height:1px;background:#888"></div>
<div class="pt" style="left:417px;top:452px;font-size:8.8px;color:#7c7c7c;line-height:12px">调试控制台</div>
<div class="pt" style="left:484px;top:452px;font-size:8.8px;color:#7c7c7c;line-height:12px">终端</div>
<div class="a" style="left:667px;top:450px;width:131px;height:15px;background:#3c3c3c"></div>
<div class="pt" style="left:671px;top:451px;font-size:10px;color:#f0f0f0;line-height:13px">任务</div>
<svg style="left:787px;top:455px" width="6" height="5" viewBox="0 0 6 5"><path d="M0 0h6L3 5z" fill="#e0e0e0"/></svg>
<svg style="left:812px;top:451px" width="11" height="13" viewBox="0 0 11 13"><path d="M1 1l3 3M4 1L1 4" stroke="#f14c4c" stroke-width="1.2"/><path d="M5 2.5h6M4 5.5h7M1 8h10M1 11h10" stroke="#c5c5c5" stroke-width="1.4"/></svg>
<svg style="left:836px;top:451px" width="11" height="13" viewBox="0 0 11 13"><rect x=".7" y="6" width="7" height="6" fill="none" stroke="#c5c5c5" stroke-width="1.2"/><path d="M5.5 6V3a2.3 2.3 0 0 1 4.6 0v2" fill="none" stroke="#c5c5c5" stroke-width="1.2"/></svg>
<svg style="left:860px;top:454px" width="11" height="7" viewBox="0 0 11 7"><path d="M1 6L5.5 1.5 10 6" fill="none" stroke="#c5c5c5" stroke-width="1.6"/></svg>
<svg style="left:885px;top:453px" width="9" height="9" viewBox="0 0 9 9"><path d="M1 1l7 7M8 1L1 8" stroke="#e0e0e0" stroke-width="1.7"/></svg>
<div class="a" style="left:892px;top:468px;width:11px;height:1px;background:#555"></div>
<!-- status bar -->
<div class="a" style="left:125px;top:631px;width:778px;height:17px;background:#007acc"></div>
<svg style="left:134px;top:635px" width="10" height="10" viewBox="0 0 10 10"><circle cx="5" cy="5" r="4.8" fill="#fff"/><path d="M3 3l4 4M7 3L3 7" stroke="#007acc" stroke-width="1.3"/></svg>
<div class="pt" style="left:146.5px;top:634px;font-size:10px;color:#fff;line-height:13px">0</div>
<svg style="left:154px;top:635px" width="10" height="10" viewBox="0 0 10 10"><path d="M5 0L10 10H0z" fill="#fff"/><path d="M5 3.5v3M5 7.5v1.2" stroke="#007acc" stroke-width="1.2"/></svg>
<div class="pt" style="left:166px;top:634px;font-size:10px;color:#fff;line-height:13px">0</div>
<div class="pt" style="left:553px;top:634px;font-size:10px;color:#fff;line-height:13px;transform:scaleX(0.926);transform-origin:0 0">行 26，列 33</div>
<div class="pt" style="left:618px;top:634px;font-size:10px;color:#fff;line-height:13px;transform:scaleX(0.93);transform-origin:0 0">制表符长度: 4</div>
<div class="pt" style="left:685.7px;top:634px;font-size:10px;color:#fff;line-height:13px;transform:scaleX(0.89);transform-origin:0 0">UTF-8</div>
<div class="pt" style="left:721.8px;top:634px;font-size:10px;color:#fff;line-height:13px;transform:scaleX(0.77);transform-origin:0 0">CRLF</div>
<div class="pt" style="left:753.3px;top:634px;font-size:10px;color:#fff;line-height:13px;transform:scaleX(0.93);transform-origin:0 0">Go</div>
<div class="pt" style="left:777px;top:634px;font-size:10px;color:#d5e250;line-height:13px;transform:scaleX(0.92);transform-origin:0 0">Analysis Tools Missing</div>
<svg style="left:880px;top:634px" width="12" height="12" viewBox="0 0 12 12"><circle cx="6" cy="6" r="5.8" fill="#fff"/><circle cx="4" cy="4.5" r=".9" fill="#007acc"/><circle cx="8" cy="4.5" r=".9" fill="#007acc"/><path d="M3.2 7q2.8 2.8 5.6 0" fill="none" stroke="#007acc" stroke-width="1"/></svg>

<!-- oldboy logo overlay -->
<svg style="left:856px;top:122px" width="52" height="38" viewBox="0 0 52 38"><path d="M5.5 5L15 5 32.5 25 40 8.5 48.5 10.5 35.5 30 28 30z" fill="#111"/><circle cx="32" cy="30.2" r="5" fill="#e8201a"/></svg>
<div class="pt" style="left:906px;top:127.5px;font-size:14.4px;color:#222;line-height:16px;font-weight:bold;letter-spacing:0">老男孩教育</div>
<div class="pt" style="left:904.5px;top:144.5px;font-size:10px;color:#222;line-height:12px;font-weight:bold;letter-spacing:.1px">oldboyedu.com</div>
<!-- video next button overlay -->
<div class="a" style="left:955px;top:332px;width:33px;height:80px;background:rgba(120,120,120,.85);border-radius:10px 0 0 10px"></div>
<svg style="left:965px;top:364px" width="9" height="15" viewBox="0 0 9 15"><path d="M1.5 1.5l6 6-6 6" fill="none" stroke="#fff" stroke-width="1.6"/></svg>

<!-- progress bar -->
<div class="a" style="left:123px;top:120.5px;width:396px;height:2px;background:#c4c4bc"></div>
<div class="a" style="left:519px;top:120px;width:401px;height:2px;background:#585858"></div>
<div class="a" style="left:968px;top:640px;width:9px;height:10px;border:1px solid rgba(255,255,255,.85)"></div>
<!-- watermark -->
<div class="pt" style="left:879px;top:640.5px;font-size:18.8px;line-height:20px;color:rgba(255,255,255,.92);font-weight:bold;text-shadow:0 0 1px #777,0 0 1px #777">绿软下载站</div>
<div class="pt" style="left:879px;top:664px;font-size:13.5px;line-height:14px;color:rgba(255,255,255,.8);text-shadow:0 0 1px #888">www.ltmop.com</div>
<div class="a" style="left:983px;top:47px;width:5px;height:644px;background:#141414"></div>
</body></html>
